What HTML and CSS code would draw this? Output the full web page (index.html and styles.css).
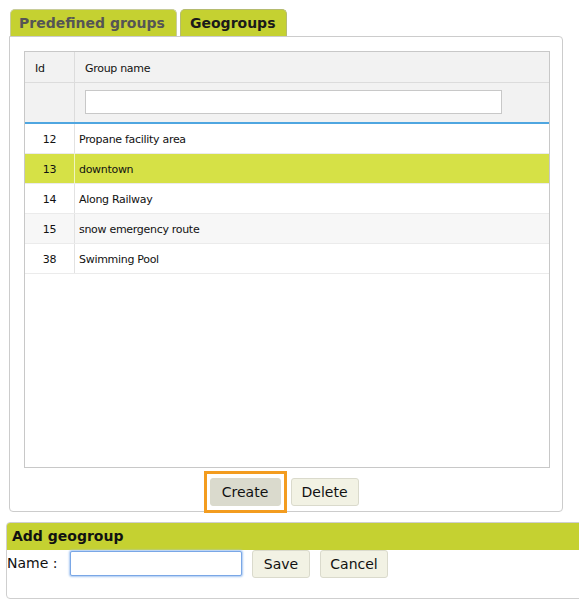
FILE: index.html
```html
<!DOCTYPE html>
<html>
<head>
<meta charset="utf-8">
<link rel="stylesheet" href="styles.css">
</head>
<body>
<div class="tabs">
  <div class="tab">Predefined groups</div>
  <div class="tab active">Geogroups</div>
</div>
<div class="panel">
  <div class="grid">
    <div class="hrow">
      <div class="c-id hid">Id</div>
      <div class="c-name hname">Group name</div>
    </div>
    <div class="frow">
      <div class="c-id"></div>
      <div class="c-name fcell"><input class="filter" type="text"></div>
    </div>
    <div class="body">
      <div class="row"><div class="c-id">12</div><div class="c-name">Propane facility area</div></div>
      <div class="row sel"><div class="c-id">13</div><div class="c-name">downtown</div></div>
      <div class="row"><div class="c-id">14</div><div class="c-name">Along Railway</div></div>
      <div class="row alt"><div class="c-id">15</div><div class="c-name">snow emergency route</div></div>
      <div class="row"><div class="c-id">38</div><div class="c-name">Swimming Pool</div></div>
    </div>
  </div>
  <div class="actions">
    <button class="btn focused w-create">Create</button>
    <button class="btn w-delete">Delete</button>
  </div>
</div>
<div class="addbox">
  <div class="addhead">Add geogroup</div>
  <div class="addrow">
    <label class="lbl">Name :</label>
    <input class="name" type="text">
    <button class="btn w-save">Save</button>
    <button class="btn w-cancel">Cancel</button>
  </div>
</div>
</body>
</html>
```
FILE: styles.css
```css
html, body {
  margin: 0;
  padding: 0;
  background: #fff;
  overflow: hidden;
}
body {
  width: 579px;
  height: 603px;
  font-family: "DejaVu Sans", Verdana, sans-serif;
  color: #111;
}
.tabs {
  display: flex;
  gap: 3px;
  padding: 9px 0 0 10px;
  height: 27px;
}
.tab {
  box-sizing: border-box;
  height: 27px;
  padding: 0 8px;
  background: #c5d131;
  border: 1px solid #c8cc9a;
  border-bottom: none;
  border-radius: 5px 5px 0 0;
  font-weight: bold;
  font-size: 14px;
  line-height: 26px;
  color: #555;
  width: 167px;
  white-space: nowrap;
}
.tab.active {
  color: #1a1a1a;
  width: 107px;
  padding: 0 9px;
  border-color: #b5bb70;
}
.panel {
  box-sizing: border-box;
  margin-left: 9px;
  width: 554px;
  height: 476px;
  border: 1px solid #ccc;
  border-radius: 0 4px 4px 4px;
  padding: 14px 12px 0 14px;
}
.grid {
  box-sizing: border-box;
  height: 417px;
  border: 1px solid #c8c8c8;
  font-size: 11px;
  letter-spacing: -0.3px;
  color: #111;
}
.hrow {
  display: flex;
  height: 31px;
  box-sizing: border-box;
  border-bottom: 1px solid #dcdcdc;
  background: #f2f2f2;
  line-height: 30px;
  padding-top: 2px;
}
.hrow .c-id {
  margin-top: -2px;
  padding-top: 2px;
}
.frow {
  display: flex;
  height: 41px;
  box-sizing: border-box;
  border-bottom: 2px solid #4fa6e0;
  background: #f2f2f2;
}
.c-id {
  box-sizing: border-box;
  width: 50px;
  flex: none;
  border-right: 1px solid #e2e2e2;
  text-align: center;
}
.c-name {
  flex: 1;
  padding-left: 4px;
}
.hid {
  text-align: left;
  padding-left: 10px;
  border-right-color: #dcdcdc;
}
.hname {
  padding-left: 10px;
}
.fcell {
  padding-left: 10px;
  padding-top: 7px;
}
.frow .c-id {
  border-right-color: #dcdcdc;
}
.filter {
  box-sizing: border-box;
  width: 417px;
  height: 24px;
  border: 1px solid #c8c8c8;
  background: #fff;
  margin: 0;
  padding: 0;
  display: block;
}
.row {
  display: flex;
  height: 30px;
  box-sizing: border-box;
  border-bottom: 1px solid #ebebeb;
  line-height: 31px;
  background: #fff;
}
.row.sel {
  background: #d6e146;
}
.row.sel .c-id {
  border-right-color: #f0f4c0;
}
.row.alt {
  background: #f7f7f7;
}
.actions {
  display: flex;
  justify-content: center;
  gap: 10px;
  padding-top: 10px;
  padding-right: 6px;
}
.btn {
  box-sizing: border-box;
  height: 28px;
  padding: 0;
  background: #f2f2e4;
  border: 1px solid #dadacc;
  border-radius: 3px;
  font-family: "DejaVu Sans", Verdana, sans-serif;
  font-size: 14px;
  color: #111;
  margin: 0;
  text-align: center;
}
.w-create { width: 71px; }
.w-delete { width: 68px; }
.w-save { width: 58px; }
.w-cancel { width: 68px; }
.btn.focused {
  background: #dadacd;
  outline: none;
  position: relative;
}
.btn.focused::after {
  content: "";
  position: absolute;
  left: -7px;
  right: -7px;
  top: -8px;
  bottom: -8px;
  border: 3px solid #f39c1f;
}
.addbox {
  box-sizing: border-box;
  margin: 10px 0 0 6px;
  width: 600px;
  height: 77px;
  border: 1px solid #cfcfcf;
  border-radius: 4px;
}
.addhead {
  height: 27px;
  background: #c5d131;
  font-weight: bold;
  font-size: 14px;
  line-height: 27px;
  padding-left: 5px;
  color: #111;
  border-radius: 3px 0 0 0;
}
.addrow {
  display: flex;
  align-items: flex-start;
  height: 28px;
  padding-top: 0;
}
.lbl {
  font-size: 14px;
  width: 63px;
  line-height: 27px;
  color: #111;
}
.name {
  box-sizing: border-box;
  width: 172px;
  height: 25px;
  margin: 1px 10px 0 0;
  border: 1px solid #7aa7e6;
  box-shadow: 0 0 2px 1px #a8c8f2;
  border-radius: 2px;
  padding: 0 4px;
}
.w-save {
  margin-right: 10px;
}
```
